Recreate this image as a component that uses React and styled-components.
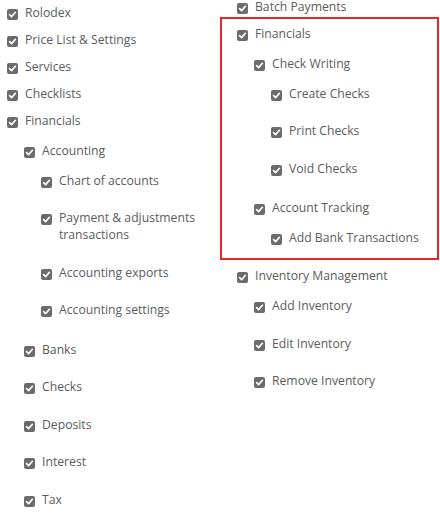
import styled, { createGlobalStyle } from "styled-components";

const GlobalStyle = createGlobalStyle`
  html, body {
    margin: 0;
    padding: 0;
    background: #ffffff;
  }
  body {
    font-family: "Open Sans", "Noto Sans", sans-serif;
    overflow: hidden;
  }
`;

const leftTree = [
  { label: "Rolodex" },
  { label: "Price List & Settings" },
  { label: "Services" },
  { label: "Checklists" },
  {
    label: "Financials",
    children: [
      {
        label: "Accounting",
        children: [
          { label: "Chart of accounts" },
          { label: "Payment & adjustments transactions" },
          { label: "Accounting exports" },
          { label: "Accounting settings" },
        ],
      },
      { label: "Banks" },
      { label: "Checks" },
      { label: "Deposits" },
      { label: "Interest" },
      { label: "Tax" },
    ],
  },
];

const rightTree = [
  { label: "Batch Payments" },
  {
    label: "Financials",
    highlight: true,
    children: [
      {
        label: "Check Writing",
        children: [
          { label: "Create Checks" },
          { label: "Print Checks" },
          { label: "Void Checks" },
        ],
      },
      {
        label: "Account Tracking",
        children: [{ label: "Add Bank Transactions" }],
      },
    ],
  },
  {
    label: "Inventory Management",
    children: [
      { label: "Add Inventory" },
      { label: "Edit Inventory" },
      { label: "Remove Inventory" },
    ],
  },
];

const Page = styled.div`
  display: grid;
  grid-template-columns: 220px 220px;
  align-items: start;
  width: 440px;
  height: 518px;
`;

const Column = styled.div`
  margin-top: ${(p) => p.$top}px;
  padding-left: ${(p) => p.$left}px;
`;

const List = styled.ul`
  list-style: none;
  margin: ${(p) => (p.$nested ? "13px 0 2px 17px" : "0")};
  padding: 0;
  display: flex;
  flex-direction: column;
  gap: ${(p) => (p.$nested ? "20.5px" : "10px")};
`;

const Item = styled.li`
  margin: 0;
  padding: 0;
`;

const Highlight = styled.li`
  margin: -8px 1px -3px -17px;
  padding: 6px 15px 8px 15px;
  border: 2px solid #e5262c;
`;

const Row = styled.label`
  display: flex;
  align-items: flex-start;
  gap: 7px;
  font-size: 12.2px;
  line-height: 17px;
  color: #5c5c5c;
  cursor: pointer;
`;

const Box = styled.span`
  flex: none;
  width: 11px;
  height: 11px;
  margin-top: 5px;
  border-radius: 2px;
  background: #6b6b6b;
  display: flex;
  align-items: center;
  justify-content: center;
`;

const Check = () => (
  <Box>
    <svg width="9" height="9" viewBox="0 0 9 9">
      <path
        d="M1.6 4.7 L3.6 6.6 L7.4 2.3"
        fill="none"
        stroke="#ffffff"
        strokeWidth="1.7"
        strokeLinecap="round"
        strokeLinejoin="round"
      />
    </svg>
  </Box>
);

const Node = ({ node }) => {
  const Wrap = node.highlight ? Highlight : Item;
  return (
    <Wrap>
      <Row>
        <Check />
        <span>{node.label}</span>
      </Row>
      {node.children && <Tree nodes={node.children} nested />}
    </Wrap>
  );
};

const Tree = ({ nodes, nested }) => (
  <List $nested={nested}>
    {nodes.map((n) => (
      <Node key={n.label} node={n} />
    ))}
  </List>
);

export default function App() {
  return (
    <>
      <GlobalStyle />
      <Page>
        <Column $top={3.5} $left={7}>
          <Tree nodes={leftTree} />
        </Column>
        <Column $top={-2.5} $left={17}>
          <Tree nodes={rightTree} />
        </Column>
      </Page>
    </>
  );
}
